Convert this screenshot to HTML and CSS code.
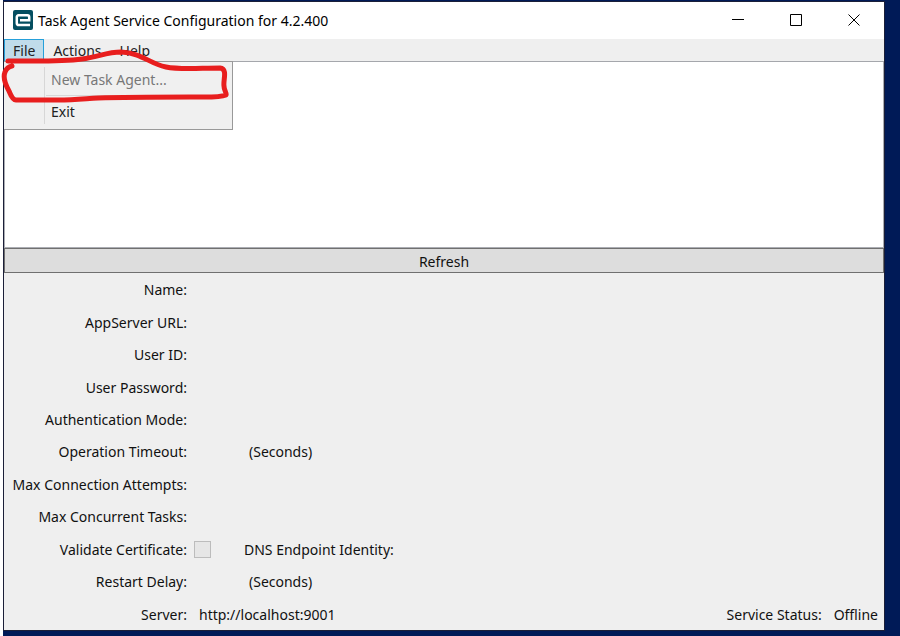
FILE: index.html
```html
<!DOCTYPE html>
<html lang="en">
<head>
<meta charset="utf-8">
<title>Task Agent Service Configuration for 4.2.400</title>
<link rel="stylesheet" href="styles.css">
</head>
<body>
<div class="desktop">
<main class="window">
  <header class="titlebar">
    <svg class="logo" width="20" height="20" viewBox="0 0 20 20" aria-hidden="true">
      <rect width="20" height="20" rx="2" fill="#044e60"/>
      <path d="M17 15H5.500a1.700 1.700 0 0 1-1.700-1.700V7A1.700 1.700 0 0 1 5.500 5.300h9A1.700 1.700 0 0 1 16.200 7v3.300H7" fill="none" stroke="#fff" stroke-width="2.500"/>
    </svg>
    <h1 class="title">Task Agent Service Configuration for 4.2.400</h1>
    <div class="controls">
      <button class="control" aria-label="Minimize"><svg width="14" height="14" viewBox="0 0 14 14"><path d="M1 6.5h12"/></svg></button>
      <button class="control" aria-label="Maximize"><svg width="14" height="14" viewBox="0 0 14 14"><path d="M1.5 1.5h11v11h-11z"/></svg></button>
      <button class="control" aria-label="Close"><svg width="14" height="14" viewBox="0 0 14 14"><path d="M1.500 1.500l11 11M12.500 1.500l-11 11"/></svg></button>
    </div>
  </header>
  <nav class="menubar">
    <button class="menu open">File</button>
    <button class="menu">Actions</button>
    <button class="menu">Help</button>
    <div class="popup">
      <button class="item" disabled>New Task Agent...</button>
      <hr class="divider">
      <button class="item">Exit</button>
    </div>
    <svg class="ink" width="232" height="60" viewBox="0 0 232 60" aria-hidden="true">
      <path d="M8 12 C32 12 60 13 82 10 C98 8 107 3 121 3 C142 4 148 14 166 18 C180 21 200 19 220 19 C228 20 223 31 224 37 C224 42 227 44 226 46 C219 49 205 48 190 48 C155 48 125 48 98 49 C82 50 74 51 58 51 L16 51 C13 51 11 47 9 42 C5 35 3 28 5 23 Q7 18 12 17"/>
    </svg>
  </nav>
  <section class="agents" aria-label="Task agents"></section>
  <button class="refresh">Refresh</button>
  <section class="details">
    <div class="row"><span class="name">Name:</span></div>
    <div class="row"><span class="name">AppServer URL:</span></div>
    <div class="row"><span class="name">User ID:</span></div>
    <div class="row"><span class="name">User Password:</span></div>
    <div class="row"><span class="name">Authentication Mode:</span></div>
    <div class="row"><span class="name">Operation Timeout:</span><span class="unit">(Seconds)</span></div>
    <div class="row"><span class="name">Max Connection Attempts:</span></div>
    <div class="row"><span class="name">Max Concurrent Tasks:</span></div>
    <div class="row"><label class="name" for="validate">Validate Certificate:</label><input class="check" id="validate" type="checkbox" disabled><span class="dns">DNS Endpoint Identity:</span></div>
    <div class="row"><span class="name">Restart Delay:</span><span class="unit">(Seconds)</span></div>
    <div class="row"><span class="name">Server:</span><span class="server">http://localhost:9001</span><span class="status"><span>Service Status:</span><span>Offline</span></span></div>
  </section>
</main>
</div>
</body>
</html>
```
FILE: styles.css
```css
* { box-sizing: border-box; }
body {
  margin: 0;
  background: #fff;
  color: #111;
  font: 14px/20px "Noto Sans", "Open Sans", sans-serif;
}
button { font: inherit; color: inherit; margin: 0; padding: 0; border: 0; background: none; }
.desktop {
  display: flex;
  min-height: 100vh;
  margin-left: 3px;
  padding: 1px 15px 5px 0;
  background: #001a57;
}
.window {
  flex: 1;
  display: flex;
  flex-direction: column;
  border: 1px solid #1b1f38;
  background: #efefef;
}
.titlebar {
  display: flex;
  align-items: center;
  height: 37px;
  padding: 0 1px 0 9px;
  background: #fff;
}
.logo { margin-bottom: 2px; }
.title { flex: 1; margin: 0 0 0 5px; font-size: 14px; font-weight: 400; color: #000; }
.controls { display: flex; }
.control { width: 58px; height: 37px; padding-bottom: 2px; display: grid; place-items: center; }
.control svg { fill: none; stroke: #000; }
.menubar {
  position: relative;
  display: flex;
  height: 23px;
  border-bottom: 1px solid #a5a7ac;
  color: #222;
}
.menu { padding: 1px 9px 0; }
.menu.open { padding: 0 8px; border: 1px solid #26a0da; border-bottom: 0; background: #c0dcea; }
.popup {
  position: absolute;
  top: 22px;
  left: 0;
  width: 229px;
  padding: 2px;
  border: 1px solid #999;
  border-left: 0;
  background: linear-gradient(#d7d7d7, #d7d7d7) 40px 5px / 1px 57px no-repeat #f0f0f0;
}
.item { display: block; width: 100%; height: 31px; padding-left: 45px; text-align: left; }
.item:disabled { color: #777; }
.divider { height: 1px; margin: 0 5px 0 40px; border: 0; background: #d7d7d7; }
.ink { position: absolute; left: -4px; top: 10px; overflow: visible; pointer-events: none; }
.ink path { fill: none; stroke: #e81e1e; stroke-width: 5; stroke-linecap: round; stroke-linejoin: round; }
.agents { height: 186px; border: solid #abadb3; border-width: 0 1px 1px; background: #fff; }
.refresh { height: 25px; padding-top: 2px; border: 1px solid #707070; background: #ddd; }
.details { flex: 1; display: flex; flex-direction: column; }
.row { flex: 1; display: flex; align-items: center; padding: 2px 6px 0 0; }
.name { width: 183px; text-align: right; white-space: nowrap; }
.unit { margin-left: 62px; }
.check {
  appearance: none;
  width: 17px;
  height: 17px;
  margin: 0 33px 0 7px;
  border: 1px solid #bcbcbc;
  background: #e6e6e6;
}
.server { margin-left: 12px; }
.status { display: flex; gap: 12px; margin-left: auto; }
```
